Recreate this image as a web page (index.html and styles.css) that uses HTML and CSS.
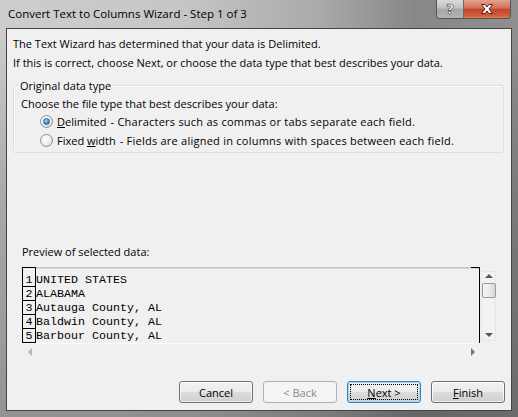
FILE: index.html
```html
<!DOCTYPE html>
<html>
<head>
<meta charset="utf-8">
<link rel="stylesheet" href="styles.css">
</head>
<body>
<div class="window">
  <div class="titlebar">
    <div class="title">Convert Text to Columns Wizard - Step 1 of 3</div>
    <div class="caption-buttons">
      <div class="cap help"><span class="q">?</span></div>
      <div class="cap close">
        <svg width="16" height="12" viewBox="0 0 16 12"><path d="M2.5 1.5 L6 1.5 L8 4 L10 1.5 L13.5 1.5 L10 6 L13.5 10.5 L10 10.5 L8 8 L6 10.5 L2.5 10.5 L6 6 Z" fill="#fff" stroke="#5a2018" stroke-width="1" stroke-linejoin="round"/></svg>
      </div>
    </div>
  </div>
  <div class="client">
    <p class="intro">The Text Wizard has determined that your data is Delimited.</p>
    <p class="intro">If this is correct, choose Next, or choose the data type that best describes your data.</p>

    <fieldset class="group">
      <legend>Original data type</legend>
      <div class="choose">Choose the file type that best describes your data:</div>
      <div class="radio-row">
        <span class="radio checked"><span class="dot"></span></span>
        <span class="rlabel"><u>D</u>elimited</span>
        <span class="rdesc">- Characters such as commas or tabs separate each field.</span>
      </div>
      <div class="radio-row">
        <span class="radio"></span>
        <span class="rlabel">Fixed <u>w</u>idth</span>
        <span class="rdesc">- Fields are aligned in columns with spaces between each field.</span>
      </div>
    </fieldset>

    <div class="preview-label">Preview of selected data:</div>

    <div class="preview">
      <div class="viewport">
        <div class="header"><span class="h-num"></span><span class="h-data"></span><span class="h-end"></span></div>
        <div class="body">
          <div class="nums">
            <span class="num">1</span>
            <span class="num">2</span>
            <span class="num">3</span>
            <span class="num">4</span>
            <span class="num">5</span>
            <span class="num"></span>
          </div>
          <div class="lines">
            <span class="data">UNITED STATES</span>
            <span class="data">ALABAMA</span>
            <span class="data">Autauga County, AL</span>
            <span class="data">Baldwin County, AL</span>
            <span class="data">Barbour County, AL</span>
          </div>
        </div>
      </div>
      <div class="vscroll">
        <span class="arrow up"></span>
        <span class="thumb"></span>
        <span class="arrow down"></span>
      </div>
      <div class="hscroll">
        <span class="arrow left"></span>
        <span class="arrow right"></span>
      </div>
    </div>

    <div class="buttons">
      <button class="btn">Cancel</button>
      <button class="btn disabled">&lt; Back</button>
      <button class="btn default"><span class="focus"><u>N</u>ext &gt;</span></button>
      <button class="btn"><u>F</u>inish</button>
    </div>
  </div>
</div>
</body>
</html>
```

FILE: styles.css
```css
* { box-sizing: border-box; }
html, body { margin: 0; padding: 0; }
body {
  width: 518px;
  height: 417px;
  overflow: hidden;
  background: #fff;
  font-family: "Open Sans", "Noto Sans", sans-serif;
  font-size: 11px;
  color: #000;
}
.window {
  width: 518px;
  height: 417px;
  display: flex;
  flex-direction: column;
  padding: 0 6px 6px 6px;
  background:
    linear-gradient(to bottom, rgba(255,255,255,0) 0px, rgba(255,255,255,0) 28px, rgba(60,60,60,0.25) 200px, rgba(40,40,40,0.35) 417px),
    linear-gradient(to right, #cdcdcd 0%, #c6c6c6 35%, #a9a9a9 62%, #878787 80%, #8f8f8f 100%);
}
.titlebar {
  height: 28px;
  flex: none;
  display: flex;
  align-items: flex-start;
}
.title {
  padding: 6px 0 0 2px;
  font-size: 11.5px;
  line-height: 16px;
  color: #000;
  flex: 1;
}
.caption-buttons {
  display: flex;
  margin-right: 1px;
  border: 1px solid #555;
  border-top: none;
  border-radius: 0 0 4px 4px;
  overflow: hidden;
  height: 19px;
}
.cap {
  height: 18px;
  display: flex;
  align-items: center;
  justify-content: center;
}
.help {
  width: 27px;
  border-right: 1px solid #6a6a6a;
  background: linear-gradient(to bottom, #d9d9d9 0%, #c2c2c2 45%, #a6a6a6 50%, #b3b3b3 100%);
}
.help .q {
  font-family: "DejaVu Sans", sans-serif;
  font-weight: bold;
  font-size: 14px;
  line-height: 14px;
  color: #fff;
  -webkit-text-stroke: 0.6px #444;
}
.close {
  width: 46px;
  background: linear-gradient(to bottom, #e4a292 0%, #d0705a 45%, #c4432a 52%, #cf5a3a 85%, #e07a58 100%);
}
.client {
  flex: 1;
  display: flex;
  flex-direction: column;
  background: #f0f0f0;
  border: 1px solid #444;
  padding: 5px 6px 7px 6px;
}
.intro {
  margin: 0;
  line-height: 19px;
}
.group {
  margin: 6px 1px 0 0;
  padding: 0 5px 2px 5px;
  border: 1px solid #d5dfe5;
  border-radius: 3px;
  box-shadow: inset 1px 1px 0 #fff;
}
.group legend {
  padding: 0 1px;
  line-height: 15px;
}
.choose {
  margin-top: 3px;
  padding-left: 2px;
  line-height: 16px;
}
.radio-row {
  display: flex;
  align-items: center;
  height: 19px;
  white-space: nowrap;
}
.radio {
  flex: none;
  width: 13px;
  height: 13px;
  margin-left: 21px;
  margin-right: 4px;
  border-radius: 50%;
  border: 1px solid #8e8f8f;
  background: radial-gradient(circle at 40% 35%, #ffffff 0%, #f0f0f0 45%, #cfcfcf 100%);
  display: flex;
  align-items: center;
  justify-content: center;
}
.radio .dot {
  width: 7px;
  height: 7px;
  border-radius: 50%;
  background: radial-gradient(circle at 40% 35%, #a9d9f5 0%, #3f8fd0 55%, #1a5d9a 100%);
  border: 1px solid #2a6aa3;
}
.rlabel { flex: none; margin-right: 4px; white-space: nowrap; }
.rdesc { letter-spacing: 0.24px; }
.preview-label {
  margin-top: 91px;
  padding-left: 9px;
  line-height: 15px;
}
.preview {
  margin-top: 8px;
  margin-left: 9px;
  display: grid;
  grid-template-columns: 458px 15px;
  grid-template-rows: 76px 16px;
  column-gap: 1px;
}
.viewport {
  overflow: hidden;
  border-right: 1px solid #000;
  font-family: "Liberation Mono", "DejaVu Sans Mono", monospace;
  font-size: 11.67px;
  display: flex;
  flex-direction: column;
}
.header {
  display: flex;
  height: 1px;
  flex: none;
}
.h-num {
  width: 14px;
  background: #000;
}
.h-data {
  flex: 1;
  background: #c6c6c6;
}
.h-end {
  width: 8px;
  background: #000;
}
.body {
  flex: 1;
  display: flex;
}
.nums {
  width: 14px;
  flex: none;
  padding-top: 5px;
  border-left: 1px solid #000;
  border-right: 1px solid #000;
  display: flex;
  flex-direction: column;
}
.num {
  flex: none;
  height: 14px;
  border-bottom: 1px solid #000;
  text-align: center;
  padding-top: 1px;
  line-height: 12px;
}
.lines {
  flex: 1;
  display: flex;
  flex-direction: column;
  border-top: 1px solid #d6d6d6;
  padding-top: 4px;
}
.data {
  flex: none;
  height: 14px;
  white-space: pre;
  padding-top: 1px;
  line-height: 12px;
}
.vscroll {
  margin-top: 4px;
  height: 70px;
  background: #f2f2f2;
  border: 1px solid #e6e6e6;
  display: flex;
  flex-direction: column;
  align-items: center;
}
.arrow {
  width: 0;
  height: 0;
  border: 4px solid transparent;
}
.arrow.up {
  margin-top: 2px;
  border-bottom: 4px solid #555;
  border-top: none;
}
.arrow.down {
  margin-top: auto;
  margin-bottom: 3px;
  border-top: 4px solid #555;
  border-bottom: none;
}
.thumb {
  margin-top: 5px;
  width: 14px;
  height: 15px;
  border: 1px solid #9b9b9b;
  border-radius: 2px;
  background: linear-gradient(to right, #f4f4f4 0%, #ededed 50%, #d6d6d6 100%);
}
.hscroll {
  grid-column: 1 / 2;
  display: flex;
  align-items: center;
  justify-content: space-between;
  padding: 0 5px 0 6px;
  border-top: 1px solid #fafafa;
}
.arrow.left {
  border-right: 4px solid #b5b5b5;
  border-left: none;
}
.arrow.right {
  border-left: 4px solid #777;
  border-right: none;
}
.buttons {
  margin-top: auto;
  display: flex;
  justify-content: flex-end;
  gap: 10px;
}
.btn {
  width: 74px;
  height: 22px;
  font-family: "Open Sans", "Noto Sans", sans-serif;
  font-size: 11px;
  color: #000;
  border: 1px solid #707070;
  border-radius: 3px;
  background: linear-gradient(to bottom, #f2f2f2 0%, #ebebeb 49%, #dddddd 50%, #cfcfcf 100%);
  box-shadow: inset 0 0 0 1px rgba(255,255,255,0.7);
  padding: 0;
  display: flex;
  align-items: center;
  justify-content: center;
}
.btn.disabled {
  color: #8a8a8a;
  border-color: #adb2b5;
  background: #f4f4f4;
  box-shadow: none;
}
.btn.default {
  border-color: #3c7fb1;
  box-shadow: inset 0 0 0 1px #9fdcf7;
}
.btn .focus {
  display: flex;
  align-items: center;
  justify-content: center;
  width: 68px;
  height: 16px;
  border: 1px dotted #000;
}
```
